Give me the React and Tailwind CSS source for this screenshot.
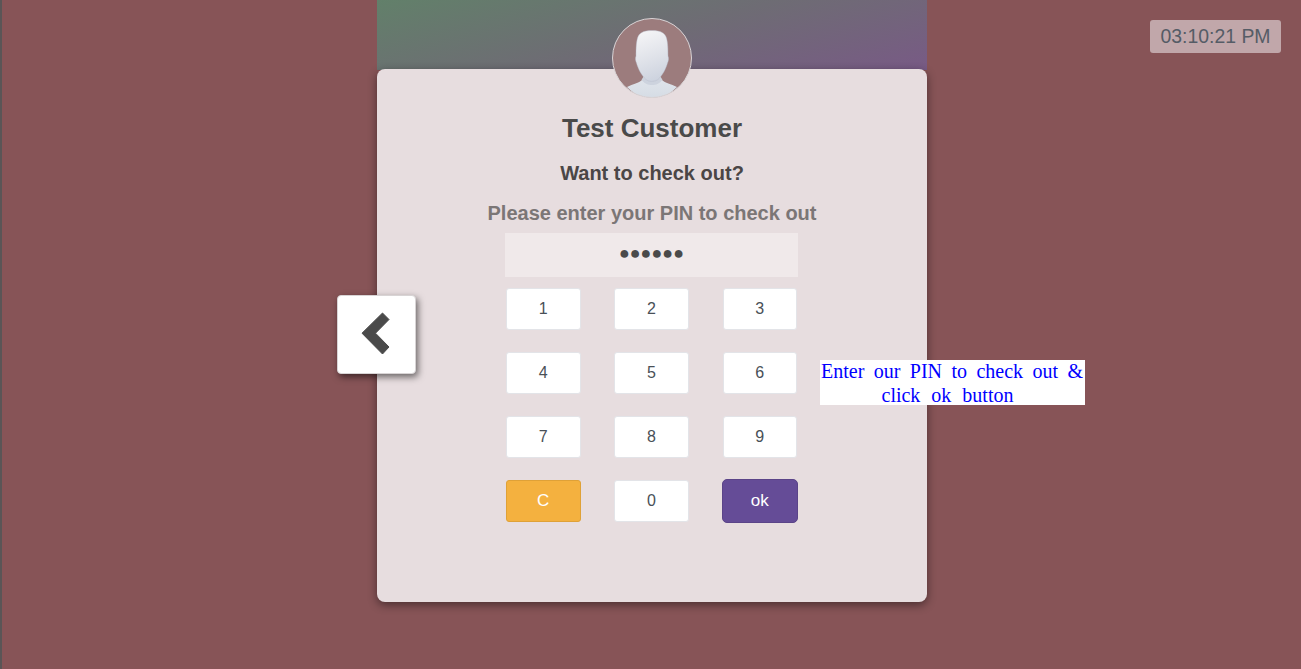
function Avatar() {
  return (
    <svg viewBox="0 0 80 80" className="block w-full h-full">
      <defs>
        <linearGradient id="head" x1="0.35" y1="0" x2="0.6" y2="1">
          <stop offset="0" stopColor="#f4f4f6" />
          <stop offset="0.55" stopColor="#dfe2e9" />
          <stop offset="1" stopColor="#ccd2de" />
        </linearGradient>
        <linearGradient id="body" x1="0" y1="0" x2="0" y2="1">
          <stop offset="0" stopColor="#e2e6ec" />
          <stop offset="1" stopColor="#d4dbe4" />
        </linearGradient>
        <clipPath id="round"><circle cx="40" cy="40" r="39.5" /></clipPath>
      </defs>
      <g clipPath="url(#round)">
        <rect width="80" height="80" fill="#9c7c7d" />
        <path d="M15 69 C21 66 27 65 30 62 L33 57 L47 57 L50 62 C53 65 59 66 65 69 C58 76 49 82 40 82 C31 82 22 76 15 69 Z" fill="url(#body)" />
        <path d="M29.5 62 C33 66 36 67 40 67 C44 67 47 66 50.5 62 L47 56 L33 56 Z" fill="#cdd3de" />
        <path d="M40 12.5 C49 12.5 53 15 54.5 20 C56 25 56 33 56 38 C57 40 56.5 43 55.5 45 C54 51 50 58 46 61.5 C43 64 37 64 34 61.5 C30 58 26 51 24.5 45 C23.5 43 23 40 24 38 C24 33 24 25 25.5 20 C27 15 31 12.5 40 12.5 Z" fill="url(#head)" stroke="#b5bccb" strokeWidth="0.4" />
      </g>
      <circle cx="40" cy="40" r="39.5" fill="none" stroke="#d9d4d6" strokeWidth="1" />
    </svg>
  );
}

function Key({ label, tone }) {
  const tones = {
    plain: "w-[74.5px] h-[42px] rounded-[3px] bg-white border-[#e3e4e8] text-[#495057] text-[16px]",
    clear: "w-[74.5px] h-[42px] rounded-[3px] bg-[#f4b13f] border-[#dfa137] text-white text-[17px]",
    ok: "w-[76px] h-[44px] rounded-[5px] bg-[#654c97] border-[#5b4488] text-white text-[17px]",
  };
  return (
    <div className="flex items-center justify-center w-[74.5px] h-[42px]">
      <button className={`${tones[tone]} shrink-0 border flex items-center justify-center`}>
        {label}
      </button>
    </div>
  );
}

export default function App() {
  const keys = [
    ["1", "plain"], ["2", "plain"], ["3", "plain"],
    ["4", "plain"], ["5", "plain"], ["6", "plain"],
    ["7", "plain"], ["8", "plain"], ["9", "plain"],
    ["C", "clear"], ["0", "plain"], ["ok", "ok"],
  ];
  return (
    <div className="relative h-[669px] w-full overflow-hidden bg-[#875457] border-l-2 border-[#5a5556] box-border font-['Liberation_Sans',Arial,sans-serif]">
      <div className="absolute top-[20px] right-[20px] w-[131px] h-[33px] rounded-[3px] bg-[#c1a7aa] text-[#555c66] text-[19.4px] flex items-center justify-center">
        03:10:21 PM
      </div>

      <div className="flex flex-col w-[550px] ml-[375px]">
        <div className="h-[70px] bg-[linear-gradient(165deg,#62806a_0%,#6e6c74_50%,#785a85_100%)]" />
        <div className="relative -mt-px h-[533px] bg-[#e7dddf] rounded-[8px] shadow-[0_3px_10px_rgba(0,0,0,0.45)] flex flex-col items-center">
          <div className="absolute -top-[51px] left-[235px] w-[80px] h-[80px] z-10">
            <Avatar />
          </div>
          <h1 className="mt-[43px] h-[32px] leading-[32px] text-[26px] font-bold text-[#4a4a4a]">Test Customer</h1>
          <h2 className="mt-[17px] h-[24px] leading-[24px] text-[20px] font-bold text-[#4b4646]">Want to check out?</h2>
          <p className="mt-[16px] h-[24px] leading-[24px] text-[20px] font-bold text-[#7b7676]">Please enter your PIN to check out</p>
          <div className="mt-[8px] mr-px w-[293px] h-[44px] bg-[#f0e9ea] flex items-center justify-center text-[#4a4a4a] text-[18px] leading-[40px] pb-[4px]">
            ●●●●●●
          </div>
          <div className="mt-[11px] mr-px w-[293px] px-px grid grid-cols-[74.5px_74.5px_74.5px] justify-between gap-y-[22px]">
            {keys.map(([label, tone]) => <Key key={label} label={label} tone={tone} />)}
          </div>
        </div>
      </div>

      <button className="absolute left-[335px] top-[295px] w-[79px] h-[79px] bg-white rounded-[4px] border border-[#d8d4d5] shadow-[2px_3px_7px_rgba(0,0,0,0.55)] flex items-center justify-center">
        <svg width="32" height="48" viewBox="0 0 32 48" className="block">
          <polygon points="1,22.2 21.5,2 28,8.5 14.5,22.2 28,36 21.5,43" fill="#4a4a4a" stroke="#4a4a4a" strokeWidth="1" strokeLinejoin="round" />
        </svg>
      </button>

      <div className="absolute left-[818px] top-[360px] w-[265px] h-[45px] bg-white text-[#0000ff] text-[20px] leading-[24px] pl-px pr-[2px] font-['Liberation_Serif',serif]">
        <div className="-mt-px [word-spacing:4px] [text-align-last:justify]">Enter our PIN to check out &amp;</div>
        <div className="text-center pr-[9px] [word-spacing:6px]">click ok button</div>
      </div>
    </div>
  );
}
